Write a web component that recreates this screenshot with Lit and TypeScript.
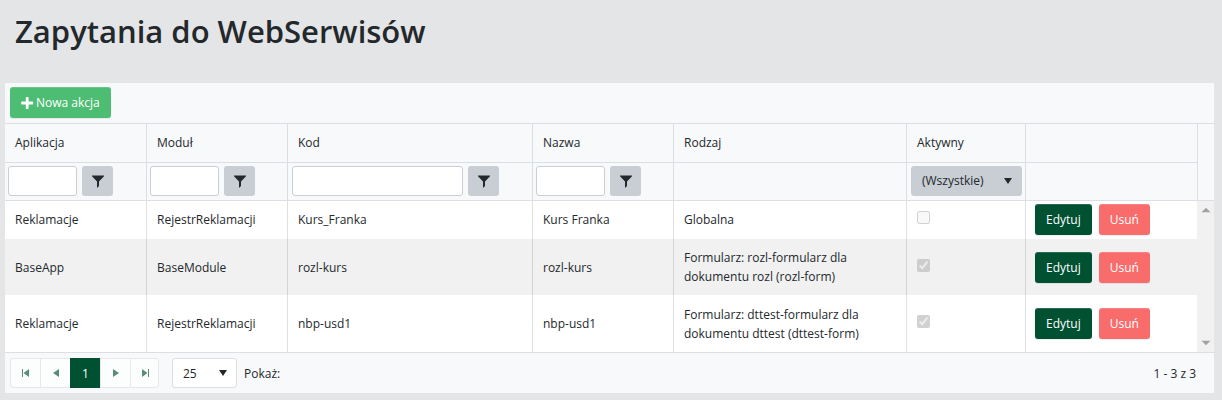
import { LitElement, html, css, svg } from "lit";
import { customElement, state } from "lit/decorators.js";

interface Query {
  app: string;
  module: string;
  code: string;
  name: string;
  kind: string;
  active: boolean;
}

const QUERIES: Query[] = [
  { app: "Reklamacje", module: "RejestrReklamacji", code: "Kurs_Franka", name: "Kurs Franka", kind: "Globalna", active: false },
  { app: "BaseApp", module: "BaseModule", code: "rozl-kurs", name: "rozl-kurs", kind: "Formularz: rozl-formularz dla dokumentu rozl (rozl-form)", active: true },
  { app: "Reklamacje", module: "RejestrReklamacji", code: "nbp-usd1", name: "nbp-usd1", kind: "Formularz: dttest-formularz dla dokumentu dttest (dttest-form)", active: true },
];

const FILTERED = ["Aplikacja", "Moduł", "Kod", "Nazwa"];

const icon = (shape: unknown, size = 16) => html`
  <svg class="icon" width=${size} height=${size} viewBox="0 0 16 16" fill="currentColor" aria-hidden="true">${shape}</svg>
`;

const PLUS = svg`<path d="M6.8 2.600a.6.6 0 0 1 .6-.6h1.600a.6.6 0 0 1 .6.6v4h4a.6.6 0 0 1 .6.6v1.600a.6.6 0 0 1-.6.6h-4v4a.6.6 0 0 1-.6.6H7.400a.6.6 0 0 1-.6-.6v-4h-4a.6.6 0 0 1-.6-.6V7.200a.6.6 0 0 1 .6-.6h4z"/>`;
const FUNNEL = svg`<path d="M2 2.500h12v.7L9 8.500V13L7 15V8.500L2 3.200z"/>`;
const DOWN = svg`<path d="M4 5h8l-4 6z"/>`;
const FIRST = svg`<path d="M4 4h1v8H4zM11 4v8L5.500 8z"/>`;
const PREV = svg`<path d="M11 4v8L5 8z"/>`;
const NEXT = svg`<path d="M5 4v8l6-4z"/>`;
const LAST = svg`<path d="M11 4h1v8h-1zM5 4v8l5.500-4z"/>`;
const SCROLL_UP = svg`<path d="M4 10h8L8 6z"/>`;
const SCROLL_DOWN = svg`<path d="M4 6h8l-4 4z"/>`;

@customElement("app-root")
export class AppRoot extends LitElement {
  static styles = css`
    :host {
      display: block;
      box-sizing: border-box;
      min-height: 100vh;
      padding: 9px 8px 7px 5px;
      background: #e4e5e6;
      color: #23282c;
      font: 12px/19px "Open Sans", "Noto Sans", sans-serif;
    }
    *, *::before, *::after { box-sizing: border-box; }
    h1 {
      margin: 0 10px 30px;
      font-size: 31px;
      line-height: 44px;
      font-weight: 600;
    }
    .icon { display: block; flex: none; }
    button, input, select { font: inherit; color: inherit; margin: 0; }
    .grid { background: #f8f9fb; }
    .toolbar {
      display: flex;
      padding: 4px 5px 5px;
      border-bottom: 1px solid #dbdfe4;
    }
    .btn {
      display: inline-flex;
      align-items: center;
      justify-content: center;
      height: 31px;
      padding: 0 11px;
      border: 0;
      border-radius: 3px;
      color: #fff;
      white-space: nowrap;
      box-shadow: inset 0 1px 0 rgba(255, 255, 255, 0.15), 0 1px 1px rgba(0, 0, 0, 0.075);
    }
    .new { padding: 0 11px 0 9px; gap: 1px; background: #4dbd74; }
    .edit { background: #005032; }
    .delete { background: #f86c6b; }

    table {
      width: 100%;
      table-layout: fixed;
      border-collapse: separate;
      border-spacing: 0;
    }
    .w-app { width: 142px; }
    .w-short { width: 141px; }
    .w-code { width: 245px; }
    .w-kind { width: 233px; }
    .w-active { width: 119px; }
    .w-actions { width: 171px; }
    .w-scroll { width: 17px; }
    th, td {
      padding: 0 9px 0 10px;
      border-right: 1px solid #dbdfe4;
      text-align: left;
      font-weight: 400;
    }
    th, .filters td { border-bottom: 1px solid #dbdfe4; }
    th { height: 39px; padding-bottom: 2px; }
    .filters td { height: 38px; padding: 0 3px 2px; }
    .filters .choice { padding-left: 4px; }
    th.last, .filters .last { border-right: 0; }
    .head-space { border-right: 0; border-left: 1px solid #dbdfe4; }
    tbody td { border-right-color: rgba(0, 0, 0, 0.12); }
    tbody tr { height: 56px; background: #fff; }
    tbody tr:first-child { height: 38px; }
    tbody tr:first-child td { padding-bottom: 2px; }
    tbody tr:last-child { height: 57px; }
    tbody tr:nth-child(even) { background: #f1f1f1; }
    tbody .actions, tbody .scroll { border-right: 0; }
    .actions { padding: 0 9px; }
    .buttons { display: flex; gap: 7px; }
    .tick { display: block; width: 13px; height: 13px; margin: 0 0 4px; }

    .filter { display: flex; gap: 5px; }
    .filter-input {
      width: 69px;
      height: 30px;
      padding: 0 8px;
      border: 1px solid #c8ced3;
      border-radius: 3px;
      background: #fff;
    }
    .wide .filter-input { flex: 0 1 171px; }
    .wide { padding-left: 1px; }
    .filter-btn {
      display: flex;
      align-items: center;
      justify-content: center;
      width: 31px;
      height: 30px;
      padding: 0;
      border: 0;
      border-radius: 3px;
      background: #c8ced3;
    }
    .select { display: grid; align-items: center; }
    .select > * { grid-area: 1 / 1; }
    .select .icon { justify-self: end; margin-right: 6px; pointer-events: none; }
    select {
      appearance: none;
      width: 100%;
      height: 30px;
      padding: 0 24px 0 10px;
      border: 1px solid #c8ced3;
      border-radius: 3px;
      background: #c8ced3;
    }
    .page-size select { border-color: #dbdfe4; background: #fff; }

    tbody tr .scroll, tbody tr:first-child .scroll { padding: 0; background: #f1f1f1; color: #a3a3a3; height: 151px; }
    .track {
      display: flex;
      flex-direction: column;
      justify-content: space-between;
      align-items: center;
      height: 151px;
    }

    .pager {
      display: flex;
      align-items: center;
      padding: 5px 18px 5px 5px;
      border-top: 1px solid #dbdfe4;
    }
    .pages { display: flex; }
    .page {
      display: flex;
      align-items: center;
      justify-content: center;
      width: 30px;
      height: 30px;
      padding: 0;
      border: 1px solid #e6e9ec;
      border-right-width: 0;
      background: #fcfdfd;
      color: #5a8c7a;
    }
    .page:first-child { border-radius: 3px 0 0 3px; }
    .page:last-child { width: 29px; border-radius: 0 3px 3px 0; border-right-width: 1px; }
    .current { border-color: #005032; background: #005032; color: #fff; }
    .page-size { display: flex; align-items: center; gap: 7px; margin-left: 13px; }
    .page-size .select { width: 65px; }
    .info { margin-left: auto; }
  `;

  @state() private rows = QUERIES;

  private filterCell(label: string) {
    return html`<td>
      <div class="filter ${label === "Kod" ? "wide" : ""}">
        <input class="filter-input" type="text" aria-label=${label} />
        <button class="filter-btn" type="button" aria-label="Filtr: ${label}">${icon(FUNNEL)}</button>
      </div>
    </td>`;
  }

  private row(q: Query, index: number) {
    return html`<tr>
      <td>${q.app}</td>
      <td>${q.module}</td>
      <td>${q.code}</td>
      <td>${q.name}</td>
      <td>${q.kind}</td>
      <td><input class="tick" type="checkbox" aria-label="Aktywny" .checked=${q.active} disabled /></td>
      <td class="actions">
        <div class="buttons">
          <button class="btn edit" type="button">Edytuj</button>
          <button class="btn delete" type="button">Usuń</button>
        </div>
      </td>
      ${index === 0
        ? html`<td class="scroll" rowspan=${this.rows.length} aria-hidden="true">
            <div class="track">${icon(SCROLL_UP, 18)}${icon(SCROLL_DOWN, 18)}</div>
          </td>`
        : ""}
    </tr>`;
  }

  render() {
    return html`
      <h1>Zapytania do WebSerwisów</h1>
      <div class="grid">
        <div class="toolbar">
          <button class="btn new" type="button">${icon(PLUS)}Nowa akcja</button>
        </div>
        <table>
          <colgroup>
            <col class="w-app" /><col class="w-short" /><col class="w-code" /><col class="w-short" />
            <col class="w-kind" /><col class="w-active" /><col class="w-actions" /><col class="w-scroll" />
          </colgroup>
          <thead>
            <tr>
              <th>Aplikacja</th><th>Moduł</th><th>Kod</th><th>Nazwa</th><th>Rodzaj</th><th>Aktywny</th>
              <th class="last"></th><th class="head-space" rowspan="2"></th>
            </tr>
            <tr class="filters">
              ${FILTERED.map((label) => this.filterCell(label))}
              <td></td>
              <td class="choice">
                <div class="select">
                  <select aria-label="Aktywny"><option>(Wszystkie)</option><option>Tak</option><option>Nie</option></select>
                  ${icon(DOWN)}
                </div>
              </td>
              <td class="last"></td>
            </tr>
          </thead>
          <tbody>${this.rows.map((q, i) => this.row(q, i))}</tbody>
        </table>
        <div class="pager">
          <div class="pages">
            <button class="page" type="button" aria-label="Pierwsza strona">${icon(FIRST)}</button>
            <button class="page" type="button" aria-label="Poprzednia strona">${icon(PREV)}</button>
            <button class="page current" type="button">1</button>
            <button class="page" type="button" aria-label="Następna strona">${icon(NEXT)}</button>
            <button class="page" type="button" aria-label="Ostatnia strona">${icon(LAST)}</button>
          </div>
          <div class="page-size">
            <div class="select">
              <select id="size"><option>25</option><option>50</option><option>100</option></select>
              ${icon(DOWN)}
            </div>
            <label for="size">Pokaż:</label>
          </div>
          <span class="info">1 - 3 z 3</span>
        </div>
      </div>
    `;
  }
}
